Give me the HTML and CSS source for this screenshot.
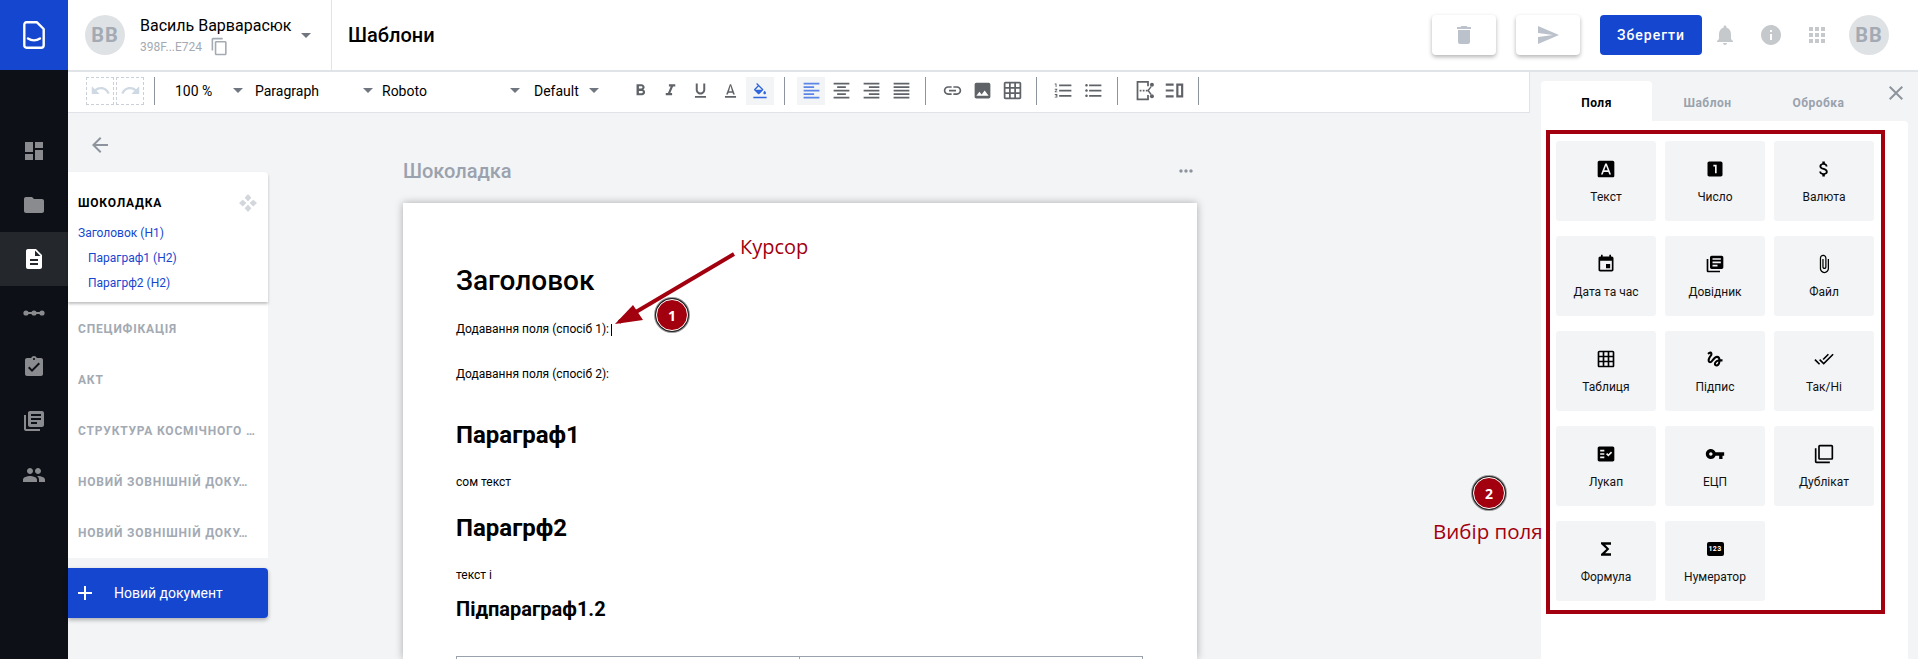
FILE: index.html
```html
<!DOCTYPE html>
<html lang="uk">
<head>
    <meta charset="UTF-8">
    <meta name="viewport" content="width=device-width, initial-scale=1.0">
    <title>Шаблони</title>
    <link rel="stylesheet" href="styles.css">
</head>
<body>

<svg class="sprite" xmlns="http://www.w3.org/2000/svg">
    <symbol id="i-dashboard" viewBox="0 0 24 24"><path d="M3 13h8V3H3v10zm0 8h8v-6H3v6zm10 0h8V11h-8v10zm0-18v6h8V3h-8z"/></symbol>
    <symbol id="i-folder" viewBox="0 0 24 24"><path d="M10 4H4c-1.1 0-1.99.9-1.99 2L2 18c0 1.1.9 2 2 2h16c1.1 0 2-.9 2-2V8c0-1.1-.9-2-2-2h-8l-2-2z"/></symbol>
    <symbol id="i-doc" viewBox="0 0 24 24"><path d="M14 2H6c-1.1 0-1.99.9-1.99 2L4 20c0 1.1.89 2 1.99 2H18c1.1 0 2-.9 2-2V8l-6-6zm2 16H8v-2h8v2zm0-4H8v-2h8v2zm-3-5V3.5L18.5 9H13z"/></symbol>
    <symbol id="i-flow" viewBox="0 0 24 24"><path d="M2 11h20v2H2z"/><circle cx="4" cy="12" r="2.6"/><circle cx="12" cy="12" r="2.6"/><circle cx="20" cy="12" r="2.6"/></symbol>
    <symbol id="i-assign" viewBox="0 0 24 24"><path d="M19 3h-4.18C14.4 1.84 13.3 1 12 1c-1.3 0-2.4.84-2.82 2H5c-1.1 0-2 .9-2 2v14c0 1.1.9 2 2 2h14c1.1 0 2-.9 2-2V5c0-1.1-.9-2-2-2zm-7 0c.55 0 1 .45 1 1s-.45 1-1 1-1-.45-1-1 .45-1 1-1zm-2 14l-4-4 1.41-1.41L10 14.17l6.59-6.59L18 9l-8 8z"/></symbol>
    <symbol id="i-library" viewBox="0 0 24 24"><path d="M4 6H2v14c0 1.1.9 2 2 2h14v-2H4V6zm16-4H8c-1.1 0-2 .9-2 2v12c0 1.1.9 2 2 2h12c1.1 0 2-.9 2-2V4c0-1.1-.9-2-2-2zm-1 9H9V9h10v2zm-4 4H9v-2h6v2zm4-8H9V5h10v2z"/></symbol>
    <symbol id="i-people" viewBox="0 0 24 24"><path d="M16 11c1.66 0 2.99-1.34 2.99-3S17.66 5 16 5c-1.66 0-3 1.34-3 3s1.34 3 3 3zm-8 0c1.66 0 2.99-1.34 2.99-3S9.66 5 8 5C6.34 5 5 6.34 5 8s1.34 3 3 3zm0 2c-2.33 0-7 1.17-7 3.5V19h14v-2.5c0-2.33-4.67-3.5-7-3.5zm8 0c-.29 0-.62.02-.97.05 1.16.84 1.97 1.97 1.97 3.45V19h6v-2.5c0-2.33-4.67-3.5-7-3.5z"/></symbol>
    <symbol id="i-copy" viewBox="0 0 24 24"><path d="M16 1H4c-1.1 0-2 .9-2 2v14h2V3h12V1zm3 4H8c-1.1 0-2 .9-2 2v14c0 1.1.9 2 2 2h11c1.1 0 2-.9 2-2V7c0-1.1-.9-2-2-2zm0 16H8V7h11v14z"/></symbol>
    <symbol id="i-delete" viewBox="0 0 24 24"><path d="M6 19c0 1.1.9 2 2 2h8c1.1 0 2-.9 2-2V7H6v12zM19 4h-3.5l-1-1h-5l-1 1H5v2h14V4z"/></symbol>
    <symbol id="i-send" viewBox="0 0 24 24"><path d="M2.01 21L23 12 2.01 3 2 10l15 2-15 2z"/></symbol>
    <symbol id="i-bell" viewBox="0 0 24 24"><path d="M12 22c1.1 0 2-.9 2-2h-4c0 1.1.89 2 2 2zm6-6v-5c0-3.07-1.64-5.64-4.5-6.32V4c0-.83-.67-1.5-1.5-1.5s-1.5.67-1.5 1.5v.68C7.63 5.36 6 7.92 6 11v5l-2 2v1h16v-1l-2-2z"/></symbol>
    <symbol id="i-info" viewBox="0 0 24 24"><path d="M12 2C6.48 2 2 6.48 2 12s4.48 10 10 10 10-4.48 10-10S17.52 2 12 2zm1 15h-2v-6h2v6zm0-8h-2V7h2v2z"/></symbol>
    <symbol id="i-apps" viewBox="0 0 24 24"><path d="M4 8h4V4H4v4zm6 12h4v-4h-4v4zm-6 0h4v-4H4v4zm0-6h4v-4H4v4zm6 0h4v-4h-4v4zm6-10v4h4V4h-4zm-6 4h4V4h-4v4zm6 6h4v-4h-4v4zm0 6h4v-4h-4v4z"/></symbol>
    <symbol id="i-close" viewBox="0 0 24 24"><path d="M19 6.41L17.59 5 12 10.59 6.41 5 5 6.41 10.59 12 5 17.59 6.41 19 12 13.41 17.59 19 19 17.59 13.41 12z"/></symbol>
    <symbol id="i-back" viewBox="0 0 24 24"><path d="M20 11H7.83l5.59-5.59L12 4l-8 8 8 8 1.41-1.41L7.83 13H20v-2z"/></symbol>
    <symbol id="i-add" viewBox="0 0 24 24"><path d="M19 13h-6v6h-2v-6H5v-2h6V5h2v6h6v2z"/></symbol>
    <symbol id="i-more" viewBox="0 0 24 24"><path d="M6 10c-1.1 0-2 .9-2 2s.9 2 2 2 2-.9 2-2-.9-2-2-2zm12 0c-1.1 0-2 .9-2 2s.9 2 2 2 2-.9 2-2-.9-2-2-2zm-6 0c-1.1 0-2 .9-2 2s.9 2 2 2 2-.9 2-2-.9-2-2-2z"/></symbol>
    <symbol id="i-move" viewBox="0 0 24 24"><path d="M12 0l4.500 5L12 10 7.500 5zM12 14l4.500 5L12 24l-4.500-5zM5 7.500L10 12l-5 4.500L0 12zM19 7.500L24 12l-5 4.500L14 12z"/></symbol>
    <symbol id="i-undo" viewBox="0 0 24 24"><path d="M12.5 8c-2.65 0-5.05.99-6.9 2.600L2 7v9h9l-3.620-3.620c1.390-1.160 3.160-1.880 5.120-1.880 3.540 0 6.550 2.310 7.600 5.500l2.370-.78C21.080 11.030 17.150 8 12.500 8z"/></symbol>
    <symbol id="i-redo" viewBox="0 0 24 24"><path d="M18.400 10.600C16.550 8.990 14.150 8 11.500 8c-4.650 0-8.580 3.030-9.960 7.220L3.900 16c1.050-3.190 4.050-5.500 7.600-5.500 1.950 0 3.730.72 5.120 1.880L13 16h9V7l-3.600 3.600z"/></symbol>
    <symbol id="i-bold" viewBox="0 0 24 24"><path d="M15.600 10.790c.97-.67 1.650-1.770 1.650-2.790 0-2.260-1.750-4-4-4H7v14h7.040c2.090 0 3.710-1.700 3.710-3.790 0-1.520-.86-2.820-2.150-3.420zM10 6.500h3c.83 0 1.500.67 1.500 1.500s-.67 1.500-1.500 1.500h-3v-3zm3.500 9H10v-3h3.500c.83 0 1.500.67 1.500 1.500s-.67 1.500-1.500 1.500z"/></symbol>
    <symbol id="i-italic" viewBox="0 0 24 24"><path d="M10 4v3h2.210l-3.420 8H6v3h8v-3h-2.210l3.420-8H18V4z"/></symbol>
    <symbol id="i-underline" viewBox="0 0 24 24"><path d="M12 17c3.310 0 6-2.690 6-6V3h-2.500v8c0 1.930-1.570 3.500-3.500 3.500S8.500 12.930 8.500 11V3H6v8c0 3.310 2.690 6 6 6zm-7 2v2h14v-2H5z"/></symbol>
    <symbol id="i-color" viewBox="0 0 24 24"><path d="M5 19v2h14v-2H5zm4.500-4.200h5l.9 2.200h2.100L12.750 4h-1.500L6.500 17h2.100l.9-2.200zM12 6.000l1.870 7h-3.740L12 6z"/></symbol>
    <symbol id="i-fill" viewBox="0 0 24 24"><path d="M16.560 8.940L7.620 0 6.210 1.410l2.380 2.380-5.150 5.150c-.59.59-.59 1.540 0 2.120l5.500 5.500c.29.29.68.44 1.060.44s.77-.15 1.060-.44l5.500-5.500c.59-.58.59-1.530 0-2.120zM5.210 10L10 5.210 14.790 10H5.210zM19 11.500s-2 2.170-2 3.500c0 1.100.9 2 2 2s2-.9 2-2c0-1.330-2-3.500-2-3.500zM2 20.500h20V23H2z"/></symbol>
    <symbol id="i-left" viewBox="0 0 24 24"><path d="M15 15H3v2h12v-2zm0-8H3v2h12V7zM3 13h18v-2H3v2zm0 8h18v-2H3v2zM3 3v2h18V3H3z"/></symbol>
    <symbol id="i-center" viewBox="0 0 24 24"><path d="M7 15v2h10v-2H7zm-4 6h18v-2H3v2zm0-8h18v-2H3v2zm4-6v2h10V7H7zM3 3v2h18V3H3z"/></symbol>
    <symbol id="i-right" viewBox="0 0 24 24"><path d="M3 21h18v-2H3v2zm6-4h12v-2H9v2zm-6-4h18v-2H3v2zm6-4h12V7H9v2zM3 3v2h18V3H3z"/></symbol>
    <symbol id="i-justify" viewBox="0 0 24 24"><path d="M3 21h18v-2H3v2zm0-4h18v-2H3v2zm0-4h18v-2H3v2zm0-4h18V7H3v2zm0-6v2h18V3H3z"/></symbol>
    <symbol id="i-link" viewBox="0 0 24 24"><path d="M3.900 12c0-1.710 1.390-3.100 3.100-3.100h4V7H7c-2.760 0-5 2.240-5 5s2.240 5 5 5h4v-1.900H7c-1.710 0-3.100-1.390-3.100-3.100zM8 13h8v-2H8v2zm9-6h-4v1.900h4c1.710 0 3.100 1.390 3.100 3.100s-1.390 3.100-3.100 3.100h-4V17h4c2.760 0 5-2.240 5-5s-2.240-5-5-5z"/></symbol>
    <symbol id="i-image" viewBox="0 0 24 24"><path d="M21 19V5c0-1.100-.9-2-2-2H5c-1.100 0-2 .9-2 2v14c0 1.100.9 2 2 2h14c1.100 0 2-.9 2-2zM8.500 13.500l2.500 3.010L14.500 12l4.500 6H5l3.500-4.500z"/></symbol>
    <symbol id="i-grid" viewBox="0 0 24 24"><path d="M20 2H4c-1.100 0-2 .9-2 2v16c0 1.100.9 2 2 2h16c1.100 0 2-.9 2-2V4c0-1.100-.9-2-2-2zM8 20H4v-4h4v4zm0-6H4v-4h4v4zm0-6H4V4h4v4zm6 12h-4v-4h4v4zm0-6h-4v-4h4v4zm0-6h-4V4h4v4zm6 12h-4v-4h4v4zm0-6h-4v-4h4v4zm0-6h-4V4h4v4z"/></symbol>
    <symbol id="i-ol" viewBox="0 0 24 24"><path d="M2 17h2v.5H3v1h1v.5H2v1h3v-4H2v1zm1-9h1V4H2v1h1v3zm-1 3h1.800L2 13.100v.9h3v-1H3.200L5 10.900V10H2v1zm5-6v2h14V5H7zm0 14h14v-2H7v2zm0-6h14v-2H7v2z"/></symbol>
    <symbol id="i-ul" viewBox="0 0 24 24"><path d="M4 10.500c-.83 0-1.500.67-1.500 1.500s.67 1.500 1.500 1.500 1.500-.67 1.500-1.500-.67-1.500-1.500-1.500zm0-6c-.83 0-1.500.67-1.500 1.500S3.170 7.500 4 7.500 5.500 6.830 5.500 6 4.830 4.500 4 4.500zm0 12c-.83 0-1.500.68-1.500 1.500s.68 1.500 1.500 1.500 1.500-.68 1.500-1.500-.67-1.500-1.500-1.500zM7 19h14v-2H7v2zm0-6h14v-2H7v2zm0-8v2h14V5H7z"/></symbol>
    <symbol id="i-insert" viewBox="0 0 24 24"><path d="M3 1h14v6h-2V3H5v18h10v-4h2v6H3zM6.500 11h2v2h-2zm3.500 0h2v2h-2zm3.500 0h2v2h-2z"/><circle cx="20.500" cy="5.500" r="2.300"/><circle cx="20.500" cy="18.500" r="2.300"/><path d="M19 7l-4 5 4 5 1.200-1-3-4 3-4z"/></symbol>
    <symbol id="i-columns" viewBox="0 0 24 24"><path d="M2 4h9v2.500H2zm0 6.750h9v2.500H2zm0 6.750h9V20H2zM14 4h8v16h-8V4zm2.500 2.500v11h3v-11h-3z"/></symbol>
    <symbol id="i-text" viewBox="0 0 24 24"><path d="M9.930 13.500h4.140L12 7.980zM20 2H4c-1.100 0-2 .9-2 2v16c0 1.100.9 2 2 2h16c1.100 0 2-.9 2-2V4c0-1.100-.9-2-2-2zm-4.050 16.500l-1.140-3H9.170l-1.120 3H5.960l5.110-13h1.860l5.110 13h-2.090z"/></symbol>
    <symbol id="i-one" viewBox="0 0 24 24"><path d="M19 3H5c-1.100 0-2 .9-2 2v14c0 1.100.9 2 2 2h14c1.100 0 2-.9 2-2V5c0-1.100-.9-2-2-2zm-5 14h-2V9h-2V7h4v10z"/></symbol>
    <symbol id="i-money" viewBox="0 0 24 24"><path d="M11.800 10.900c-2.270-.59-3-1.200-3-2.150 0-1.090 1.010-1.850 2.700-1.850 1.780 0 2.440.85 2.500 2.100h2.210c-.07-1.720-1.120-3.300-3.210-3.810V3h-3v2.160c-1.940.42-3.500 1.680-3.500 3.610 0 2.310 1.910 3.460 4.700 4.130 2.500.6 3 1.480 3 2.410 0 .69-.49 1.790-2.700 1.790-2.060 0-2.870-.92-2.980-2.100h-2.200c.12 2.190 1.760 3.420 3.680 3.830V21h3v-2.150c1.950-.37 3.500-1.500 3.500-3.550 0-2.840-2.430-3.810-4.700-4.400z"/></symbol>
    <symbol id="i-event" viewBox="0 0 24 24"><path d="M17 12h-5v5h5v-5zM16 1v2H8V1H6v2H5c-1.110 0-1.990.9-1.990 2L3 19c0 1.100.89 2 2 2h14c1.100 0 2-.9 2-2V5c0-1.100-.9-2-2-2h-1V1h-2zm3 18H5V8h14v11z"/></symbol>
    <symbol id="i-attach" viewBox="0 0 24 24"><path d="M16.500 6v11.500c0 2.210-1.790 4-4 4s-4-1.790-4-4V5c0-1.380 1.120-2.500 2.500-2.500s2.500 1.120 2.500 2.500v10.500c0 .55-.45 1-1 1s-1-.45-1-1V6H10v9.500c0 1.380 1.120 2.500 2.500 2.500s2.500-1.120 2.500-2.500V5c0-2.210-1.790-4-4-4S7 2.790 7 5v12.500c0 3.040 2.460 5.500 5.500 5.500s5.500-2.460 5.500-5.500V6h-1.500z"/></symbol>
    <symbol id="i-gesture" viewBox="0 0 24 24"><path d="M4.590 6.890c.7-.71 1.400-1.350 1.710-1.220.5.2 0 1.030-.3 1.520-.25.42-2.860 3.890-2.860 6.310 0 1.280.48 2.340 1.340 2.980.75.56 1.740.73 2.640.46 1.070-.31 1.950-1.400 3.060-2.770 1.210-1.490 2.830-3.440 4.080-3.440 1.630 0 1.650 1.010 1.760 1.790-3.780.64-5.380 3.670-5.380 5.370 0 1.700 1.440 3.090 3.210 3.090 1.630 0 4.290-1.330 4.690-6.100H21v-2.500h-2.470c-.15-1.650-1.090-4.200-4.030-4.200-2.250 0-4.180 1.910-4.940 2.840-.58.73-2.060 2.480-2.290 2.720-.25.3-.68.84-1.110.84-.45 0-.72-.83-.36-1.920.35-1.090 1.400-2.860 1.850-3.520.78-1.140 1.300-1.920 1.300-3.280C8.950 3.690 7.310 3 6.440 3 5.120 3 3.970 4 3.720 4.250c-.36.36-.66.66-.88.93l1.750 1.710zm9.290 11.660c-.31 0-.74-.26-.74-.72 0-.6.73-2.200 2.870-2.760-.3 2.690-1.430 3.480-2.130 3.480z"/></symbol>
    <symbol id="i-done" viewBox="0 0 24 24"><path d="M18 7l-1.410-1.410-6.340 6.340 1.410 1.410L18 7zm4.240-1.410L11.660 16.170 7.480 12l-1.410 1.410L11.660 19l12-12-1.420-1.410zM.41 13.410L6 19l1.410-1.410L1.830 12 .41 13.410z"/></symbol>
    <symbol id="i-lookup" viewBox="0 0 24 24"><path d="M20 3H4c-1.100 0-2 .9-2 2v14c0 1.100.9 2 2 2h16c1.100 0 2-.9 2-2V5c0-1.100-.9-2-2-2zM10 17H5v-2h5v2zm0-4H5v-2h5v2zm0-4H5V7h5v2zm4.820 6L12 12.160l1.410-1.410 1.410 1.420L17.990 9l1.420 1.420L14.820 15z"/></symbol>
    <symbol id="i-key" viewBox="0 0 24 24"><path d="M12.650 10C11.830 7.670 9.610 6 7 6c-3.310 0-6 2.690-6 6s2.690 6 6 6c2.610 0 4.830-1.670 5.650-4H17v4h4v-4h2v-4H12.650zM7 14c-1.100 0-2-.9-2-2s.9-2 2-2 2 .9 2 2-.9 2-2 2z"/></symbol>
    <symbol id="i-dup" viewBox="0 0 24 24"><path d="M3 5H1v16c0 1.100.9 2 2 2h16v-2H3V5zm18-4H7c-1.100 0-2 .9-2 2v14c0 1.100.9 2 2 2h14c1.100 0 2-.9 2-2V3c0-1.100-.9-2-2-2zm0 16H7V3h14v14z"/></symbol>
    <symbol id="i-sigma" viewBox="0 0 24 24"><path d="M18 4H6v2l6.500 6L6 18v2h12v-3h-7l5-5-5-5h7z"/></symbol>
</svg>

<div class="app">
    <nav class="nav">
        <div class="logo">
            <svg class="logo-ico" width="22" height="28" viewBox="0 0 22 28">
                <path d="M3.500 1.300h10.500l6.700 6.700v16.200c0 1.400-1 2.500-2.500 2.500H3.500c-1.400 0-2.200-1-2.200-2.500V3.800c0-1.500.8-2.500 2.200-2.500z"/>
                <path d="M5 17.500c3.500 2.300 8.500 2.300 12 0"/>
            </svg>
        </div>
        <a class="nav-item"><svg class="nav-ico"><use href="#i-dashboard"/></svg></a>
        <a class="nav-item"><svg class="nav-ico"><use href="#i-folder"/></svg></a>
        <a class="nav-item active"><svg class="nav-ico"><use href="#i-doc"/></svg></a>
        <a class="nav-item"><svg class="nav-ico"><use href="#i-flow"/></svg></a>
        <a class="nav-item"><svg class="nav-ico"><use href="#i-assign"/></svg></a>
        <a class="nav-item"><svg class="nav-ico"><use href="#i-library"/></svg></a>
        <a class="nav-item"><svg class="nav-ico"><use href="#i-people"/></svg></a>
    </nav>

    <div class="main">
        <header class="header">
            <div class="account">
                <div class="avatar">ВВ</div>
                <div class="account-info">
                    <div class="account-name">Василь Варварасюк</div>
                    <div class="account-id">398F...E724 <svg class="copy-ico"><use href="#i-copy"/></svg></div>
                </div>
                <span class="caret caret-account"></span>
            </div>
            <h1 class="page-title">Шаблони</h1>
            <div class="header-actions">
                <button class="ghost-btn"><svg class="ghost-ico"><use href="#i-delete"/></svg></button>
                <button class="ghost-btn"><svg class="ghost-ico"><use href="#i-send"/></svg></button>
                <button class="save-btn">Зберегти</button>
                <svg class="head-ico"><use href="#i-bell"/></svg>
                <svg class="head-ico"><use href="#i-info"/></svg>
                <svg class="head-ico"><use href="#i-apps"/></svg>
                <div class="avatar avatar-right">ВВ</div>
            </div>
        </header>

        <div class="work">
            <div class="editor">
                <div class="toolbar">
                    <button class="tb-btn tb-off"><svg><use href="#i-undo"/></svg></button>
                    <button class="tb-btn tb-off"><svg><use href="#i-redo"/></svg></button>
                    <span class="tb-sep"></span>
                    <div class="tb-select sel-zoom"><span>100 %</span><span class="caret"></span></div>
                    <div class="tb-select sel-para"><span>Paragraph</span><span class="caret"></span></div>
                    <div class="tb-select sel-font"><span>Roboto</span><span class="caret"></span></div>
                    <div class="tb-select sel-size"><span>Default</span><span class="caret"></span></div>
                    <button class="tb-btn tb-small"><svg><use href="#i-bold"/></svg></button>
                    <button class="tb-btn tb-small"><svg><use href="#i-italic"/></svg></button>
                    <button class="tb-btn tb-small"><svg><use href="#i-underline"/></svg></button>
                    <button class="tb-btn tb-small"><svg><use href="#i-color"/></svg></button>
                    <button class="tb-btn tb-on tb-fill"><svg><use href="#i-fill"/></svg></button>
                    <span class="tb-sep"></span>
                    <button class="tb-btn tb-on"><svg><use href="#i-left"/></svg></button>
                    <button class="tb-btn"><svg><use href="#i-center"/></svg></button>
                    <button class="tb-btn"><svg><use href="#i-right"/></svg></button>
                    <button class="tb-btn"><svg><use href="#i-justify"/></svg></button>
                    <span class="tb-sep"></span>
                    <button class="tb-btn"><svg><use href="#i-link"/></svg></button>
                    <button class="tb-btn"><svg><use href="#i-image"/></svg></button>
                    <button class="tb-btn"><svg><use href="#i-grid"/></svg></button>
                    <span class="tb-sep"></span>
                    <button class="tb-btn"><svg><use href="#i-ol"/></svg></button>
                    <button class="tb-btn"><svg><use href="#i-ul"/></svg></button>
                    <span class="tb-sep"></span>
                    <button class="tb-btn"><svg><use href="#i-insert"/></svg></button>
                    <button class="tb-btn"><svg><use href="#i-columns"/></svg></button>
                    <span class="tb-sep"></span>
                </div>

                <div class="editor-body">
                    <aside class="outline">
                        <div class="back-row"><svg class="back-ico"><use href="#i-back"/></svg></div>
                        <div class="doc-card">
                            <div class="doc-card-head">
                                <span class="doc-name doc-name-on">Шоколадка</span>
                                <svg class="move-ico"><use href="#i-move"/></svg>
                            </div>
                            <a class="toc-link">Заголовок (Н1)</a>
                            <a class="toc-link toc-sub">Параграф1 (Н2)</a>
                            <a class="toc-link toc-sub">Парагрф2 (Н2)</a>
                        </div>
                        <ul class="doc-list">
                            <li class="doc-name">Специфікація</li>
                            <li class="doc-name">Акт</li>
                            <li class="doc-name">Структура космічного …</li>
                            <li class="doc-name">Новий зовнішній доку…</li>
                            <li class="doc-name">Новий зовнішній доку…</li>
                        </ul>
                        <button class="new-doc"><svg class="add-ico"><use href="#i-add"/></svg>Новий документ</button>
                    </aside>

                    <section class="doc-area">
                        <div class="doc-title-row">
                            <span class="doc-title">Шоколадка</span>
                            <svg class="more-ico"><use href="#i-more"/></svg>
                        </div>
                        <article class="sheet">
                            <h2 class="h-one">Заголовок</h2>
                            <p class="para para-first">Додавання поля (спосіб 1):<span class="text-cursor"></span></p>
                            <p class="para para-second">Додавання поля (спосіб 2):</p>
                            <h3 class="h-two h-two-first">Параграф1</h3>
                            <p class="para para-a">сом текст</p>
                            <h3 class="h-two">Парагрф2</h3>
                            <p class="para para-a">текст і</p>
                            <h4 class="h-three">Підпараграф1.2</h4>
                            <table class="sheet-table">
                                <tr><td></td><td></td></tr>
                            </table>
                        </article>
                    </section>
                </div>
            </div>

            <aside class="panel">
                <div class="tabs">
                    <span class="tab tab-on">Поля</span>
                    <span class="tab">Шаблон</span>
                    <span class="tab">Обробка</span>
                    <svg class="close-ico"><use href="#i-close"/></svg>
                </div>
                <div class="panel-body">
                    <div class="fields">
                        <div class="field"><svg class="field-ico"><use href="#i-text"/></svg>Текст</div>
                        <div class="field"><svg class="field-ico"><use href="#i-one"/></svg>Число</div>
                        <div class="field"><svg class="field-ico"><use href="#i-money"/></svg>Валюта</div>
                        <div class="field"><svg class="field-ico"><use href="#i-event"/></svg>Дата та час</div>
                        <div class="field"><svg class="field-ico"><use href="#i-library"/></svg>Довідник</div>
                        <div class="field"><svg class="field-ico"><use href="#i-attach"/></svg>Файл</div>
                        <div class="field"><svg class="field-ico"><use href="#i-grid"/></svg>Таблиця</div>
                        <div class="field"><svg class="field-ico"><use href="#i-gesture"/></svg>Підпис</div>
                        <div class="field"><svg class="field-ico"><use href="#i-done"/></svg>Так/Ні</div>
                        <div class="field"><svg class="field-ico"><use href="#i-lookup"/></svg>Лукап</div>
                        <div class="field"><svg class="field-ico"><use href="#i-key"/></svg>ЕЦП</div>
                        <div class="field"><svg class="field-ico"><use href="#i-dup"/></svg>Дублікат</div>
                        <div class="field"><svg class="field-ico"><use href="#i-sigma"/></svg>Формула</div>
                        <div class="field"><span class="num-ico">123</span>Нумератор</div>
                    </div>
                </div>
            </aside>
        </div>
    </div>

    <!-- annotations drawn over the screen -->
    <div class="note-frame"></div>
    <svg class="note-arrow" width="140" height="80" viewBox="0 0 140 80">
        <path d="M131 2L16 70" stroke="#a3000f" stroke-width="4" fill="none"/>
        <path d="M12 72L30 53 40 68z" fill="#a3000f"/>
    </svg>
    <span class="note-text note-cursor">Курсор</span>
    <span class="note-badge note-badge-1">1</span>
    <span class="note-badge note-badge-2">2</span>
    <span class="note-text note-pick">Вибір поля</span>
</div>

</body>
</html>
```

FILE: styles.css
```css
* { box-sizing: border-box; }
html, body { margin: 0; height: 100%; overflow: hidden; }
body { font-family: Roboto, "Liberation Sans", sans-serif; color: #000; background: #f3f4f6; }
button { font-family: inherit; border: 0; padding: 0; background: none; }
h1, h2, h3, h4, p, ul { margin: 0; padding: 0; }
svg { display: block; fill: currentColor; }
.sprite { display: none; }

.app { position: relative; display: flex; width: 1918px; height: 659px; overflow: hidden; }

/* left nav */
.nav { width: 68px; flex: none; background: #0d1117; color: #898b8f; }
.logo { height: 70px; margin-bottom: 54px; background: #1546cf; display: flex; align-items: center; justify-content: center; }
.logo-ico { fill: none; stroke: #fff; stroke-width: 2.4; stroke-linecap: round; stroke-linejoin: round; }
.nav-item { display: flex; height: 54px; align-items: center; justify-content: center; }
.nav-item.active { background: #24282d; color: #fff; }
.nav-ico { width: 24px; height: 24px; }

.main { flex: 1; min-width: 0; display: flex; flex-direction: column; }

/* header */
.header { height: 72px; flex: none; display: flex; align-items: center; background: #fff; border-bottom: 2px solid #e0e3e7; }
.account { width: 264px; height: 70px; display: flex; align-items: center; padding-left: 17px; border-right: 1px solid #e0e3e7; }
.avatar { width: 40px; height: 40px; border-radius: 50%; background: #dfe2e5; color: #a3aab3; font-size: 20px; font-weight: 700; letter-spacing: 1px; display: flex; align-items: center; justify-content: center; flex: none; }
.account-info { margin-left: 15px; width: 159px; }
.account-name { font-size: 16px; line-height: 20px; white-space: nowrap; }
.account-id { display: flex; align-items: center; gap: 8px; margin-top: 3px; height: 16px; font-size: 12px; line-height: 16px; color: #a3aab3; }
.copy-ico { width: 19px; height: 19px; color: #a3aab3; }
.caret { display: inline-block; width: 0; height: 0; border: 5px solid transparent; border-top-color: #6f7680; border-bottom: 0; }
.caret-account { margin-left: 2px; }
.page-title { font-size: 20px; font-weight: 500; margin-left: 16px; }
.header-actions { margin-left: auto; display: flex; align-items: center; padding-right: 29px; }
.ghost-btn { width: 64px; height: 40px; margin-right: 20px; background: #fff; border-radius: 4px; box-shadow: 0 2px 4px rgba(0,0,0,.3); display: flex; align-items: center; justify-content: center; color: #bcc2cb; }
.ghost-ico { width: 24px; height: 24px; }
.save-btn { width: 102px; height: 40px; background: #1546cf; color: #fff; border-radius: 4px; font-size: 14px; font-weight: 500; letter-spacing: 1px; margin-right: 11px; }
.head-ico { width: 24px; height: 24px; color: #c6c9cc; margin-right: 22px; }
.avatar-right { margin-left: -2px; }

.work { flex: 1; min-height: 0; display: flex; }
.editor { width: 1462px; flex: none; display: flex; flex-direction: column; }

/* toolbar */
.toolbar { height: 41px; flex: none; display: flex; align-items: center; padding: 0 0 3px 18px; background: #fff; border-bottom: 1px solid #e0e3e7; border-right: 1px solid #e0e3e7; color: #5f6368; }
.tb-btn { width: 28px; height: 28px; margin-right: 2px; display: flex; align-items: center; justify-content: center; color: #5f6368; }
.tb-btn svg { width: 21px; height: 21px; }
.tb-small svg { width: 19px; height: 19px; }
.tb-fill svg { width: 16px; height: 16px; }
.tb-off { border: 1px dashed #c9d0d8; color: #cfd9e3; }
.tb-on { background: #f3f4f6; color: #5b85e6; }
.tb-fill { color: #2f66dd; }
.tb-sep { width: 1px; height: 28px; background: #8d949d; margin: 0 12px 0 8px; }
.tb-select { display: flex; align-items: center; justify-content: space-between; font-size: 14px; color: #000; }
.tb-select span:first-child { white-space: nowrap; }
.sel-zoom { width: 68px; margin: 0 12px 0 8px; }
.sel-para { width: 118px; margin-right: 9px; }
.sel-font { width: 138px; margin-right: 14px; }
.sel-size { width: 65px; margin-right: 27px; }

.editor-body { flex: 1; min-height: 0; display: flex; }

/* outline */
.outline { width: 200px; flex: none; }
.back-row { height: 59px; padding: 20px 0 0 20px; color: #8d949d; }
.back-ico { width: 24px; height: 24px; }
.doc-card { height: 130px; background: #fff; border-radius: 0 4px 0 0; box-shadow: 0 2px 3px rgba(0,0,0,.25); padding: 0 10px; position: relative; }
.doc-card-head { display: flex; justify-content: space-between; align-items: center; height: 49px; padding-top: 12px; }
.doc-name { font-size: 12px; font-weight: 700; letter-spacing: .8px; text-transform: uppercase; color: #a3aab3; }
.doc-name-on { color: #000; }
.move-ico { width: 18px; height: 18px; color: #d3d7dc; margin-right: 1px; }
.toc-link { display: block; font-size: 12px; line-height: 25px; color: #1546cf; }
.toc-sub { padding-left: 10px; }
.doc-list { list-style: none; background: #fff; height: 256px; padding-top: 2px; }
.doc-list li { height: 51px; line-height: 51px; padding: 0 0 0 10px; white-space: nowrap; }
.new-doc { display: flex; align-items: center; width: 200px; height: 50px; margin-top: 10px; padding-left: 5px; background: #1546cf; color: #fff; font-size: 14px; border-radius: 0 4px 4px 0; box-shadow: 0 2px 4px rgba(0,0,0,.3); }
.add-ico { width: 24px; height: 24px; margin-right: 17px; }

/* document */
.doc-area { width: 794px; margin-left: 135px; display: flex; flex-direction: column; min-height: 0; }
.doc-title-row { height: 90px; flex: none; display: flex; align-items: center; justify-content: space-between; padding: 26px 1px 0 0; }
.doc-title { font-size: 20px; font-weight: 500; color: #9aa2ad; }
.more-ico { width: 20px; height: 20px; color: #8d949d; }
.sheet { flex: 1; min-height: 0; background: #fff; padding: 61px 53px 0; box-shadow: 0 0 8px rgba(0,0,0,.3); }
.h-one { font-size: 28px; line-height: 34px; font-weight: 500; }
.para { font-size: 12px; line-height: 16px; margin-top: 23px; }
.para-second { margin-top: 29px; }
.text-cursor { display: inline-block; width: 1px; height: 12px; margin-left: 2px; background: #000; vertical-align: -3px; }
.h-two { font-size: 24px; line-height: 28px; font-weight: 700; margin-top: 24px; }
.h-two-first { margin-top: 39px; }
.para-a { margin-top: 25px; }
.h-three { font-size: 20px; line-height: 24px; font-weight: 700; margin-top: 14px; }
.sheet-table { width: 687px; margin-top: 35px; border-collapse: collapse; table-layout: fixed; }
.sheet-table td { height: 40px; border: 1px solid #9aa2ad; }

/* right panel */
.panel { flex: 1; padding: 9px 10px 0 11px; display: flex; flex-direction: column; background: #f3f4f6; }
.tabs { height: 40px; flex: none; display: flex; position: relative; }
.tab { width: 111px; display: flex; align-items: center; justify-content: center; font-size: 12px; font-weight: 700; letter-spacing: .5px; color: #9aa2ad; padding-top: 3px; }
.tab-on { background: #fff; color: #000; border-radius: 4px 4px 0 0; }
.close-ico { position: absolute; right: 0; top: 0; width: 24px; height: 24px; color: #8d949d; }
.panel-body { flex: 1; background: #fff; border-radius: 0 4px 0 0; padding: 20px 15px 0; }
.fields { display: grid; grid-template-columns: repeat(3, 100px); grid-auto-rows: 80px; column-gap: 9px; row-gap: 15px; }
.field { display: flex; flex-direction: column; align-items: center; padding-top: 18px; background: #f3f4f6; border-radius: 3px; font-size: 12px; line-height: 16px; color: #111; }
.field-ico { width: 20px; height: 20px; margin-bottom: 10px; color: #000; }
.num-ico { width: 17px; height: 14px; margin: 3px 0 13px; background: #000; color: #fff; border-radius: 2px; font-size: 7px; font-weight: 700; line-height: 14px; text-align: center; letter-spacing: .3px; }

/* annotations */
.note-frame { position: absolute; left: 1546px; top: 130px; width: 339px; height: 484px; border: 4px solid #a3000f; }
.note-arrow { position: absolute; left: 603px; top: 252px; }
.note-text { position: absolute; font-family: "Open Sans", sans-serif; font-size: 20px; line-height: 28px; color: #a3000f; white-space: nowrap; }
.note-cursor { left: 740px; top: 233px; }
.note-pick { left: 1433px; top: 517px; font-size: 20.5px; }
.note-badge { position: absolute; width: 32px; height: 32px; border-radius: 50%; background: #a3000f; border: 1px solid #fff; box-shadow: 0 0 0 1px #222, 0 0 0 2px #999; color: #fff; font-family: "Open Sans", sans-serif; font-size: 14px; font-weight: 700; display: flex; align-items: center; justify-content: center; }
.note-badge-1 { left: 656px; top: 299px; }
.note-badge-2 { left: 1473px; top: 477px; }
```
